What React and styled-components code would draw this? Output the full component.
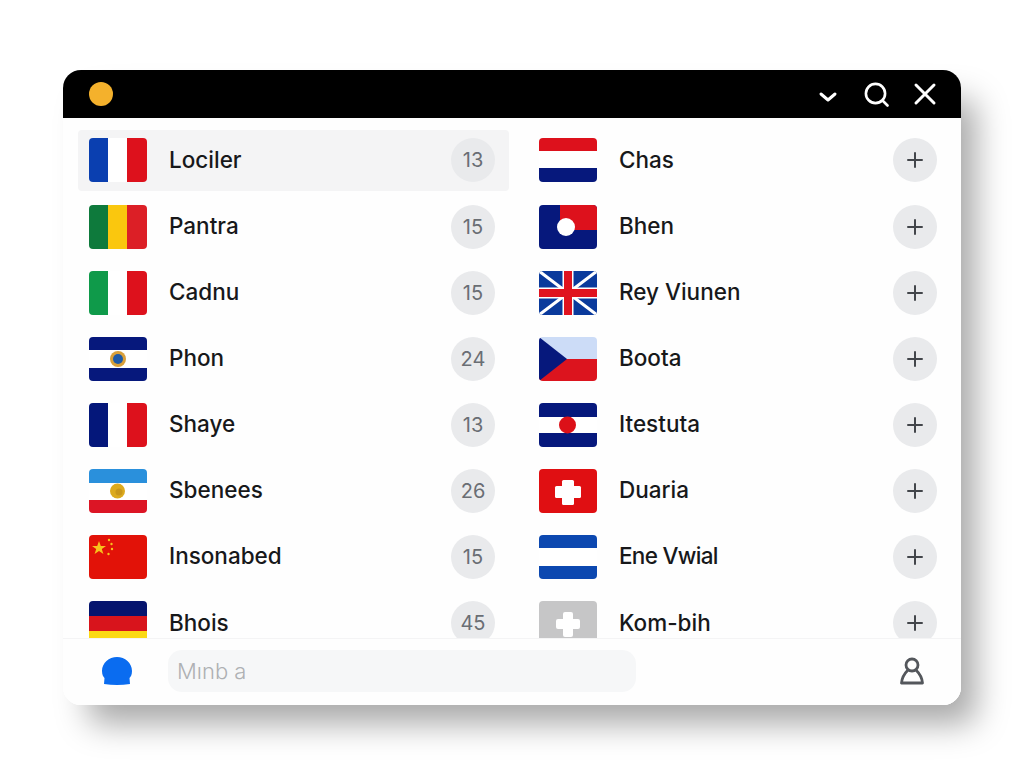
import React from 'react';
import styled, { createGlobalStyle } from 'styled-components';

const Global = createGlobalStyle`
  html, body { margin: 0; padding: 0; background: #fff; }
  body { font-family: Inter, "Liberation Sans", sans-serif; }
`;

const Page = styled.div`
  width: 1024px;
  height: 768px;
  padding: 70px 0 0 63px;
  box-sizing: border-box;
  overflow: hidden;
`;

const Window = styled.section`
  width: 898px;
  height: 635px;
  display: flex;
  flex-direction: column;
  background: #fefefe;
  border-radius: 18px;
  overflow: hidden;
`;

const Shadowed = styled.div`
  width: 898px;
  height: 635px;
  border-radius: 18px;
  box-shadow: 20px 24px 32px -5px rgba(0, 0, 0, 0.34);
`;

const Header = styled.header`
  flex: 0 0 48px;
  background: #000;
  display: flex;
  align-items: center;
  justify-content: space-between;
  padding: 0 24px 0 26px;
`;

const Dot = styled.span`
  width: 24px;
  height: 24px;
  border-radius: 50%;
  background: #f4b12c;
`;

const Tools = styled.div`
  display: flex;
  align-items: center;
  gap: 24px;
  color: #fff;
`;

const Icon = styled.svg`
  display: block;
  fill: none;
  stroke: currentColor;
  stroke-linecap: round;
  stroke-linejoin: round;
`;

const Chevron = styled(Icon)`
  margin-top: 6px;
  margin-right: 2px;
`;

const List = styled.div`
  flex: 1;
  min-height: 0;
  overflow: hidden;
  display: grid;
  grid-template-columns: 431px 423px;
  column-gap: 19px;
  grid-auto-rows: 61px;
  row-gap: 5.1px;
  padding: 12px 10px 0 15px;
`;

const Row = styled.div`
  display: flex;
  align-items: center;
  box-sizing: border-box;
  padding: 0 14px 0.2px 11px;
  border-radius: 4px;
  background: ${p => (p.$active ? '#f4f4f5' : 'transparent')};
`;

const FlagFrame = styled.span`
  flex: 0 0 58px;
  height: 44px;
  border-radius: 4px;
  overflow: hidden;
  display: block;
`;

const Name = styled.span`
  flex: 1;
  margin: -2px 0 0 22px;
  font-size: 22.5px;
  font-weight: 500;
  letter-spacing: ${p => (p.$tight ? '-0.7px' : '0')};
  color: #17181a;
  white-space: nowrap;
`;

const Count = styled.span`
  flex: 0 0 44px;
  height: 44px;
  border-radius: 50%;
  background: #e9eaec;
  color: #6a6e74;
  font-size: 20px;
  display: flex;
  align-items: center;
  justify-content: center;
`;

const Add = styled(Count)`
  color: #43464b;
`;

const Footer = styled.footer`
  flex: 0 0 67px;
  box-sizing: border-box;
  border-top: 1px solid #f4f4f5;
  background: #fefefe;
  display: flex;
  align-items: center;
  padding: 0 36px 2px 38px;
`;

const Field = styled.div`
  width: 468px;
  height: 42px;
  margin-left: 35px;
  padding-left: 9px;
  box-sizing: border-box;
  border-radius: 14px;
  background: #f6f7f8;
  color: #aeb0b3;
  font-size: 22px;
  font-weight: 300;
  display: flex;
  align-items: center;
`;

const Person = styled(Icon)`
  margin-left: auto;
  color: #54575c;
`;

const W = 58, H = 44;
const Svg = ({ children }) => (
  <svg width={W} height={H} viewBox="0 0 58 44" style={{ display: 'block' }}>{children}</svg>
);
const Vert = ({ c }) => (
  <Svg>
    <rect x="0" width="20" height="44" fill={c[0]} />
    <rect x="19" width="20" height="44" fill={c[1]} />
    <rect x="38" width="20" height="44" fill={c[2]} />
  </Svg>
);
const Horiz = ({ c, h = [13, 17, 14], children }) => (
  <Svg>
    <rect y="0" width="58" height={h[0]} fill={c[0]} />
    <rect y={h[0]} width="58" height={h[1]} fill={c[1]} />
    <rect y={h[0] + h[1]} width="58" height={h[2]} fill={c[2]} />
    {children}
  </Svg>
);

const flags = {
  fr: <Vert c={['#0a3fb0', '#ffffff', '#dd111c']} />,
  ml: <Vert c={['#0e7a3c', '#fac70e', '#dc1f26']} />,
  it: <Vert c={['#0f9a4a', '#ffffff', '#dd111c']} />,
  fr2: <Vert c={['#04177a', '#ffffff', '#dd111c']} />,
  cr: (
    <Horiz c={['#06187c', '#ffffff', '#06187c']} h={[13, 18, 13]}>
      <circle cx="29" cy="22" r="8" fill="#d9a03a" />
      <circle cx="29" cy="22" r="5" fill="#1f5aa8" />
    </Horiz>
  ),
  ar: (
    <Horiz c={['#2a90dc', '#ffffff', '#dc1525']} h={[14, 17, 13]}>
      <circle cx="28.5" cy="22" r="7.5" fill="#dcaa1e" />
      <circle cx="30" cy="23" r="3.5" fill="#c8961a" />
    </Horiz>
  ),
  cn: (
    <Svg>
      <rect width="58" height="44" fill="#e21208" />
      <polygon points="10,6 11.8,11 17,11 12.8,14 14.4,19 10,16 5.6,19 7.2,14 3,11 8.2,11" fill="#f7c21c" />
      <circle cx="20" cy="5" r="1.2" fill="#f7c21c" />
      <circle cx="22.5" cy="9" r="1.2" fill="#f7c21c" />
      <circle cx="23" cy="14" r="1.2" fill="#f7c21c" />
      <circle cx="19.5" cy="19" r="1.2" fill="#f7c21c" />
    </Svg>
  ),
  de: <Horiz c={['#05146e', '#d8141c', '#fbd914']} h={[15, 15, 14]} />,
  nl: <Horiz c={['#dd111c', '#ffffff', '#06187c']} h={[13, 17, 14]} />,
  la: (
    <Svg>
      <rect width="58" height="44" fill="#06187c" />
      <rect x="21" width="37" height="25" fill="#dd111c" />
      <circle cx="27" cy="22" r="9" fill="#fff" />
    </Svg>
  ),
  gb: (
    <Svg>
      <rect width="58" height="44" fill="#0a3a9c" />
      <path d="M0 0 L58 44 M58 0 L0 44" stroke="#fff" strokeWidth="3" />
      <rect x="23.5" width="11" height="44" fill="#fff" />
      <rect y="16.5" width="58" height="11" fill="#fff" />
      <rect x="25" width="8" height="44" fill="#e0131f" />
      <rect y="18" width="58" height="8" fill="#e0131f" />
    </Svg>
  ),
  cz: (
    <Svg>
      <rect width="58" height="22" fill="#ccdcf7" />
      <rect y="22" width="58" height="22" fill="#dc141e" />
      <polygon points="0,0 28,22 0,44" fill="#06187c" />
    </Svg>
  ),
  cr2: (
    <Horiz c={['#06187c', '#ffffff', '#06187c']} h={[14, 16, 14]}>
      <circle cx="28.5" cy="22" r="8.5" fill="#dc1018" />
    </Horiz>
  ),
  ch: (
    <Svg>
      <rect width="58" height="44" fill="#e00f12" />
      <rect x="23" y="11" width="12" height="25" rx="1.5" fill="#fff" />
      <rect x="16" y="17" width="26" height="12" rx="1.5" fill="#fff" />
    </Svg>
  ),
  hn: <Horiz c={['#0c48b0', '#ffffff', '#0c48b0']} h={[13, 18, 13]} />,
  gr: (
    <Svg>
      <rect width="58" height="44" fill="#c6c6c7" />
      <rect x="24" y="11" width="10" height="25" rx="2" fill="#fff" />
      <rect x="17" y="18" width="24" height="10" rx="2" fill="#fff" />
    </Svg>
  ),
};

const left = [
  ['fr', 'Lociler', 13], ['ml', 'Pantra', 15], ['it', 'Cadnu', 15], ['cr', 'Phon', 24],
  ['fr2', 'Shaye', 13], ['ar', 'Sbenees', 26], ['cn', 'Insonabed', 15], ['de', 'Bhois', 45],
];
const right = [
  ['nl', 'Chas'], ['la', 'Bhen'], ['gb', 'Rey Viunen'], ['cz', 'Boota'],
  ['cr2', 'Itestuta'], ['ch', 'Duaria'], ['hn', 'Ene Vwial', true], ['gr', 'Kom-bih'],
];

const Plus = () => (
  <Icon width="18" height="18" viewBox="0 0 18 18" strokeWidth="2">
    <path d="M9 2 V16 M2 9 H16" />
  </Icon>
);

export default function App() {
  return (
    <Page>
      <Global />
      <Shadowed>
        <Window>
          <Header>
            <Dot />
            <Tools>
              <Chevron width="20" height="12" viewBox="0 0 20 12" strokeWidth="3">
                <path d="M3 3 L10 9 L17 3" />
              </Chevron>
              <Icon width="25" height="25" viewBox="0 0 25 25" strokeWidth="2.6">
                <circle cx="11.5" cy="11.5" r="9.6" />
                <path d="M19 19 L23.5 23.5" />
              </Icon>
              <Icon width="24" height="24" viewBox="0 0 24 24" strokeWidth="3">
                <path d="M3 3 L21 21 M21 3 L3 21" />
              </Icon>
            </Tools>
          </Header>
          <List>
            {left.map(([f, n, c], i) => (
              <React.Fragment key={n}>
                <Row $active={i === 0}>
                  <FlagFrame>{flags[f]}</FlagFrame>
                  <Name>{n}</Name>
                  <Count>{c}</Count>
                </Row>
                <Row>
                  <FlagFrame>{flags[right[i][0]]}</FlagFrame>
                  <Name $tight={right[i][2]}>{right[i][1]}</Name>
                  <Add><Plus /></Add>
                </Row>
              </React.Fragment>
            ))}
          </List>
          <Footer>
            <svg width="32" height="30" viewBox="0 0 32 30" style={{ display: 'block' }}>
              <path d="M16 1 C24 1 31 7 31 15 C31 19 29.5 21 28.5 22 L29 28 Q16 30 3 28 L3.5 22 C2.5 21 1 19 1 15 C1 7 8 1 16 1 Z" fill="#0a6cf0" />
            </svg>
            <Field>Mınb a</Field>
            <Person width="26" height="28" viewBox="0 0 26 28" strokeWidth="2.8">
              <circle cx="13" cy="8" r="6" />
              <path d="M9 13 C6 16 3 20 2.5 26 H23.5 C23 20 20 16 17 13" />
            </Person>
          </Footer>
        </Window>
      </Shadowed>
    </Page>
  );
}
